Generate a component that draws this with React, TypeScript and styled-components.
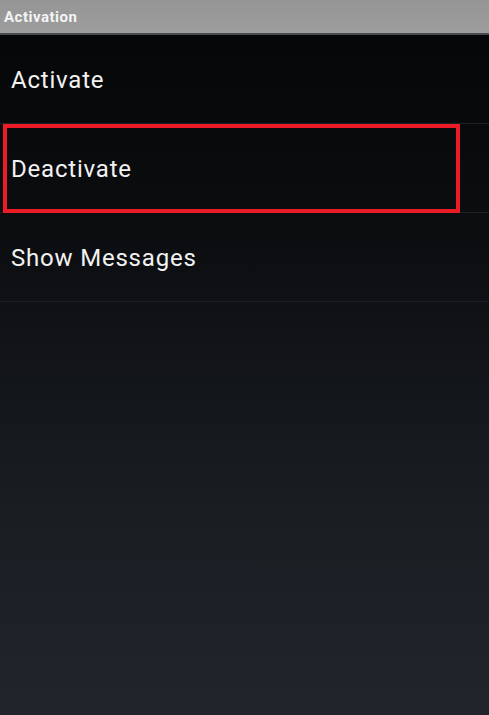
import styled, { createGlobalStyle } from "styled-components";

const GlobalStyle = createGlobalStyle`
  html, body {
    margin: 0;
    padding: 0;
    background: #050607;
  }

  #root {
    min-height: 100vh;
  }
`;

const Screen = styled.div`
  display: flex;
  flex-direction: column;

  width: 489px;
  height: 715px;

  font-family: Roboto, "Liberation Sans", sans-serif;
  background: linear-gradient(180deg, #040506 0%, #0c0e11 35%, #1b1f24 75%, #20252b 100%);
  overflow: hidden;
`;

const TitleBar = styled.div`
  display: flex;
  align-items: center;

  height: 33px;
  padding-left: 4px;

  font-size: 15px;
  font-weight: 700;
  letter-spacing: 0.5px;
  color: #f4f4f4;
  background: linear-gradient(180deg, #959595 0%, #9d9d9d 100%);
  border-bottom: 2px solid #4a4a4a;
`;

const List = styled.div`
  display: flex;
  flex-direction: column;
`;

interface ItemProps {
  highlighted?: boolean;
}

const Item = styled.div<ItemProps>`
  position: relative;
  display: flex;
  align-items: center;

  height: 89px;
  padding-left: 11px;
  padding-top: 2px;
  box-sizing: border-box;

  font-size: 24px;
  letter-spacing: 0.8px;
  color: #f2f2f2;
  border-bottom: 1px solid #1c1f23;

  &::after {
    content: "";
    display: ${({ highlighted }) => (highlighted ? "block" : "none")};
    position: absolute;
    left: 3px;
    top: 0;
    width: 457px;
    height: 89px;
    box-sizing: border-box;
    border: 4px solid #ec1c26;
  }
`;

const App = () => {
  return (
    <>
      <GlobalStyle />
      <Screen>
        <TitleBar>Activation</TitleBar>
        <List>
          <Item>Activate</Item>
          <Item highlighted>Deactivate</Item>
          <Item>Show Messages</Item>
        </List>
      </Screen>
    </>
  );
};

export default App;
